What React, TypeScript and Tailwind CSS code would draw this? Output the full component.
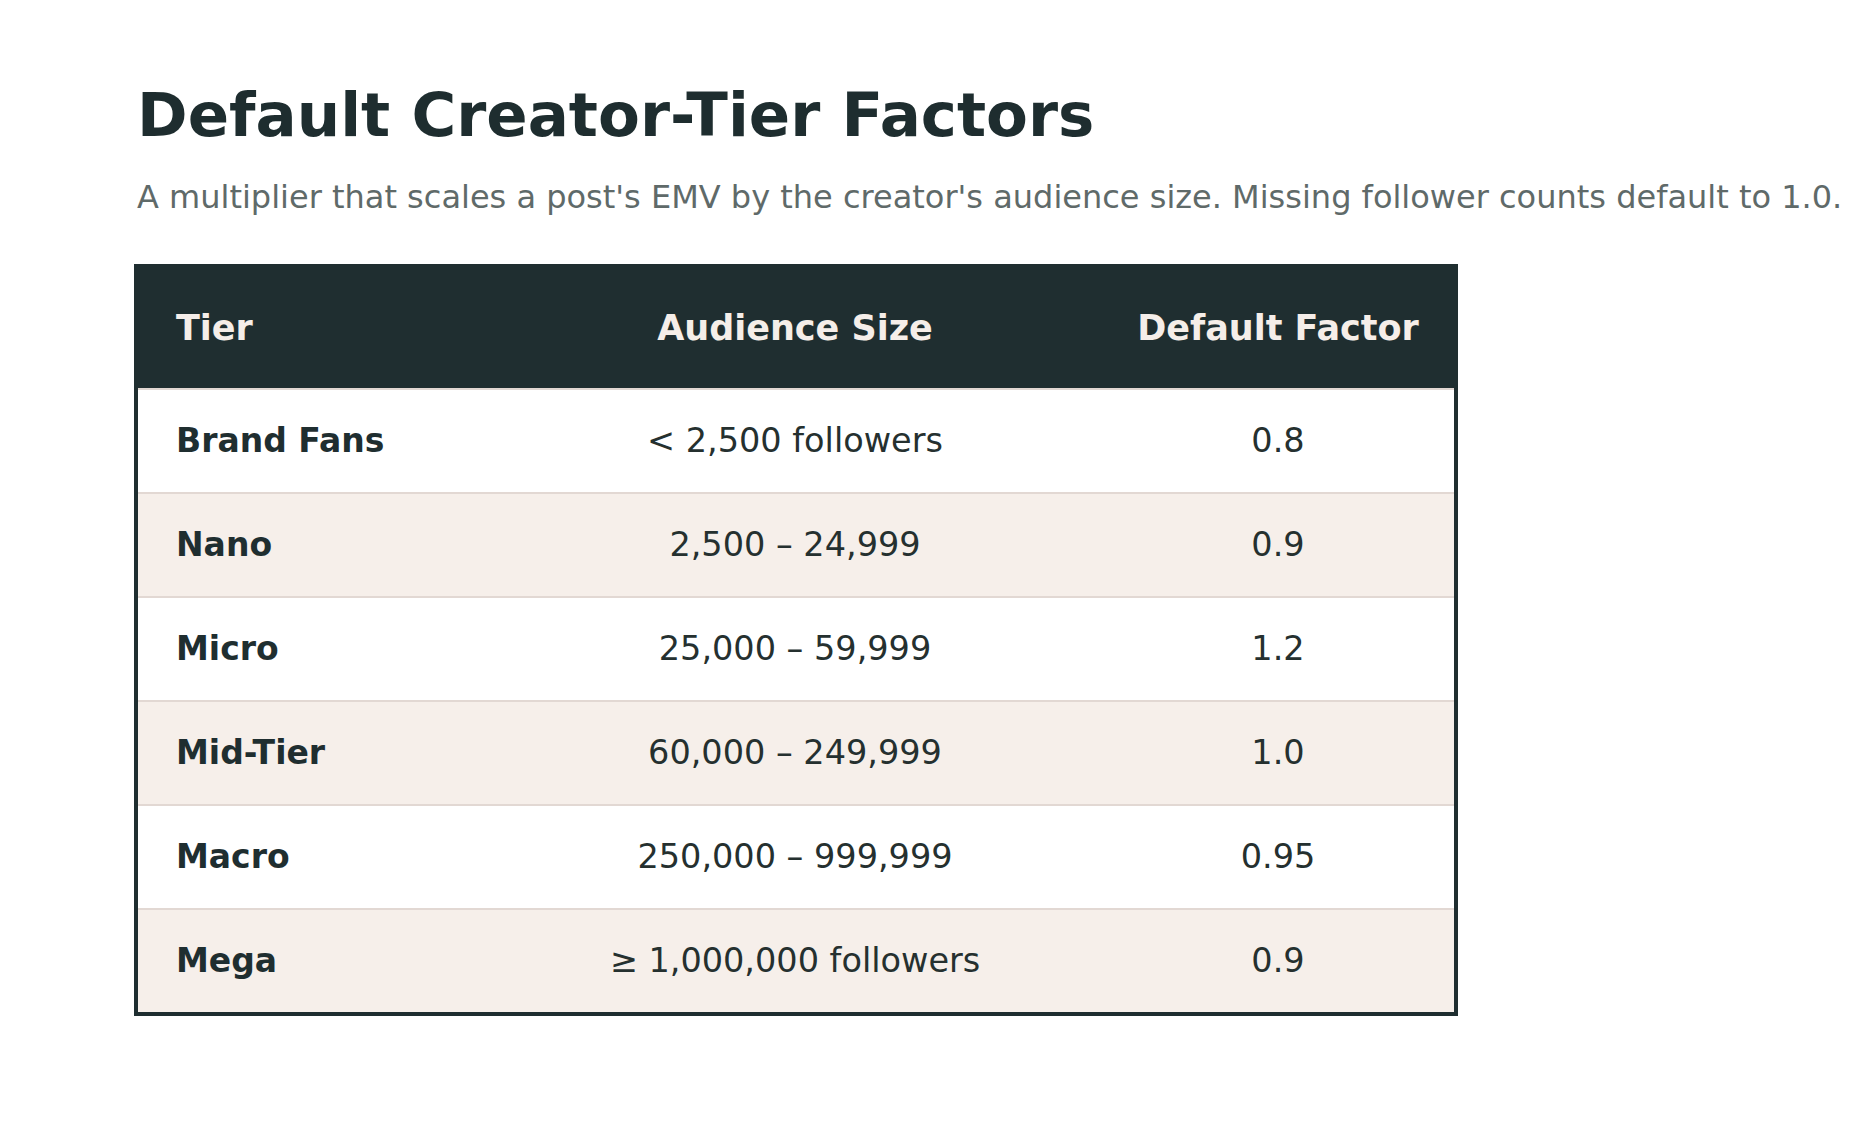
const tiers = [
  { name: "Brand Fans", range: "< 2,500 followers", factor: "0.8" },
  { name: "Nano", range: "2,500 – 24,999", factor: "0.9" },
  { name: "Micro", range: "25,000 – 59,999", factor: "1.2" },
  { name: "Mid-Tier", range: "60,000 – 249,999", factor: "1.0" },
  { name: "Macro", range: "250,000 – 999,999", factor: "0.95" },
  { name: "Mega", range: "≥ 1,000,000 followers", factor: "0.9" },
];

export default function App() {
  return (
    <div className="min-h-screen bg-white pl-[137px] pt-[84px] font-['DejaVu_Sans',sans-serif]">
      <h1 className="text-[61px] font-bold leading-none text-[#1e2d2f]">
        Default Creator-Tier Factors
      </h1>
      <p className="mt-[36px] text-[32px] leading-none text-[#5f6a69] whitespace-nowrap">
        A multiplier that scales a post's EMV by the creator's audience size. Missing follower counts default to 1.0.
      </p>

      <div className="mt-[51px] ml-[-3px] w-[1324px] border-[4px] border-[#1f2e30]">
        <div className="grid h-[120px] grid-cols-[350px_614px_1fr] items-center bg-[#1f2e30] text-[35px] font-bold text-[#f5eee9]">
          <div className="pl-[38px]">Tier</div>
          <div className="text-center">Audience Size</div>
          <div className="text-center">Default Factor</div>
        </div>
        {tiers.map((t, i) => (
          <div
            key={t.name}
            className={`grid h-[104px] grid-cols-[350px_614px_1fr] items-center border-t-2 border-[#e2d8d3] ${
              i % 2 === 1 ? "bg-[#f6efea]" : "bg-white"
            }`}
          >
            <div className="pl-[38px] text-[33px] font-bold text-[#1f2e30]">{t.name}</div>
            <div className="text-center text-[33.5px] text-[#25302f]">{t.range}</div>
            <div className="text-center text-[33.5px] text-[#25302f]">{t.factor}</div>
          </div>
        ))}
      </div>
    </div>
  );
}
